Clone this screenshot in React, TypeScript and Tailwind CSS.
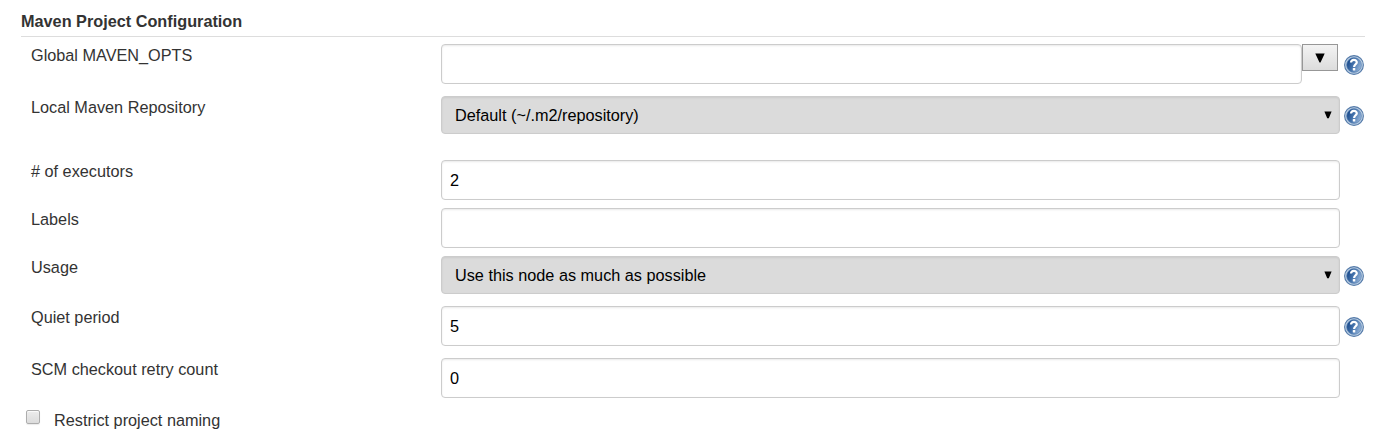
import React from "react";

function HelpIcon() {
  return (
    <svg width="20" height="20" viewBox="0 0 20 20" className="block" role="img" aria-label="Help">
      <defs>
        <linearGradient id="helpFill" x1="0" y1="0.3" x2="1" y2="0.7">
          <stop offset="0.1" stopColor="#1f4f90" />
          <stop offset="0.5" stopColor="#4a78b0" />
          <stop offset="1" stopColor="#9bb8db" />
        </linearGradient>
      </defs>
      <circle cx="10" cy="10" r="9.4" fill="#bccfe4" stroke="#557ba9" strokeWidth="1.1" />
      <circle cx="10" cy="10" r="7.4" fill="url(#helpFill)" stroke="#5e86b6" strokeWidth="0.7" />
      <path
        d="M7 7.6C7 5.6 8.2 4.9 9.8 4.9C11.6 4.9 12.8 5.8 12.8 7.3C12.8 9.2 10.1 9.5 10.1 12"
        fill="none"
        stroke="#fff"
        strokeWidth="2.2"
      />
      <rect x="8.8" y="13.1" width="2.5" height="2.5" rx="0.5" fill="#fff" />
    </svg>
  );
}

const fieldClass =
  "block h-10 w-full rounded-[4px] border border-[#ccc] bg-white px-2 text-[16.25px] text-black shadow-[inset_0_1px_2px_rgba(0,0,0,0.09)] outline-none";

function TextField({ label, value = "" }: { label: string; value?: string }) {
  return <input aria-label={label} defaultValue={value} className={fieldClass} />;
}

function SelectField({ label, value }: { label: string; value: string }) {
  return (
    <div
      role="combobox"
      aria-label={label}
      className="flex h-[38px] w-full items-center justify-between rounded-[4px] border border-[#ccc] bg-[#dbdbdb] pr-[7px] pl-[13px] text-[16.25px] leading-6 text-black shadow-[inset_0_1px_2px_rgba(0,0,0,0.08)]"
    >
      <span>{value}</span>
      <svg width="8" height="8" viewBox="0 0 8 8" className="-mt-px">
        <path d="M0.4 0.5H7.6L4.8 7.2H3.2Z" fill="#000" />
      </svg>
    </div>
  );
}

function Row({
  label,
  className,
  helpClass,
  children,
}: {
  label: string;
  className: string;
  helpClass?: string;
  children: React.ReactNode;
}) {
  return (
    <div className={`flex items-start ${className}`}>
      <div className="w-[410px] shrink-0 leading-[22px]">{label}</div>
      <div className="w-[899px] shrink-0">{children}</div>
      {helpClass && (
        <div className={`ml-1 ${helpClass}`}>
          <HelpIcon />
        </div>
      )}
    </div>
  );
}

export default function App() {
  return (
    <main className="h-[442px] w-[1382px] overflow-hidden bg-white pt-[10px] pl-[21px] font-['Liberation_Sans',Arial,sans-serif] text-[16.25px] text-[#333]">
      <h1 className="h-[27px] w-[1344px] border-b border-[#ddd] text-[16.25px] leading-[22px] font-bold">
        Maven Project Configuration
      </h1>
      <div className="pt-[7px] pl-[10px]">
        <Row label="Global MAVEN_OPTS" className="h-[52px]" helpClass="pt-[11px]">
          <div className="flex items-start">
            <div className="w-[861px]">
              <TextField label="Global MAVEN_OPTS" />
            </div>
            <button
              aria-label="Expand"
              className="flex h-[27px] w-9 items-center justify-center border border-[#979797] bg-linear-to-b from-[#f3f3f3] to-[#dcdcdc]"
            >
              <svg width="10" height="10" viewBox="0 0 10 10">
                <path d="M0.3 0.5H9.7L5.5 9.5H4.5Z" fill="#000" />
              </svg>
            </button>
          </div>
        </Row>
        <Row label="Local Maven Repository" className="h-16" helpClass="pt-[10px]">
          <SelectField label="Local Maven Repository" value="Default (~/.m2/repository)" />
        </Row>
        <Row label="# of executors" className="h-12">
          <TextField label="# of executors" value="2" />
        </Row>
        <Row label="Labels" className="h-12">
          <TextField label="Labels" />
        </Row>
        <Row label="Usage" className="h-[50px]" helpClass="pt-[10px]">
          <SelectField label="Usage" value="Use this node as much as possible" />
        </Row>
        <Row label="Quiet period" className="h-[52px]" helpClass="pt-[11px]">
          <TextField label="Quiet period" value="5" />
        </Row>
        <Row label="SCM checkout retry count" className="h-[51px]">
          <TextField label="SCM checkout retry count" value="0" />
        </Row>
      </div>
      <label className="flex items-start pl-[5px] leading-[22px]">
        <input
          type="checkbox"
          className="mt-px mr-[14px] h-[14px] w-[14px] appearance-none rounded-[2px] border border-[#adadad] bg-linear-to-b from-[#ececec] to-[#dcdcdc] shadow-[inset_0_1px_1px_rgba(255,255,255,0.8),0_1px_1px_rgba(0,0,0,0.08)]"
        />
        <span>Restrict project naming</span>
      </label>
    </main>
  );
}
